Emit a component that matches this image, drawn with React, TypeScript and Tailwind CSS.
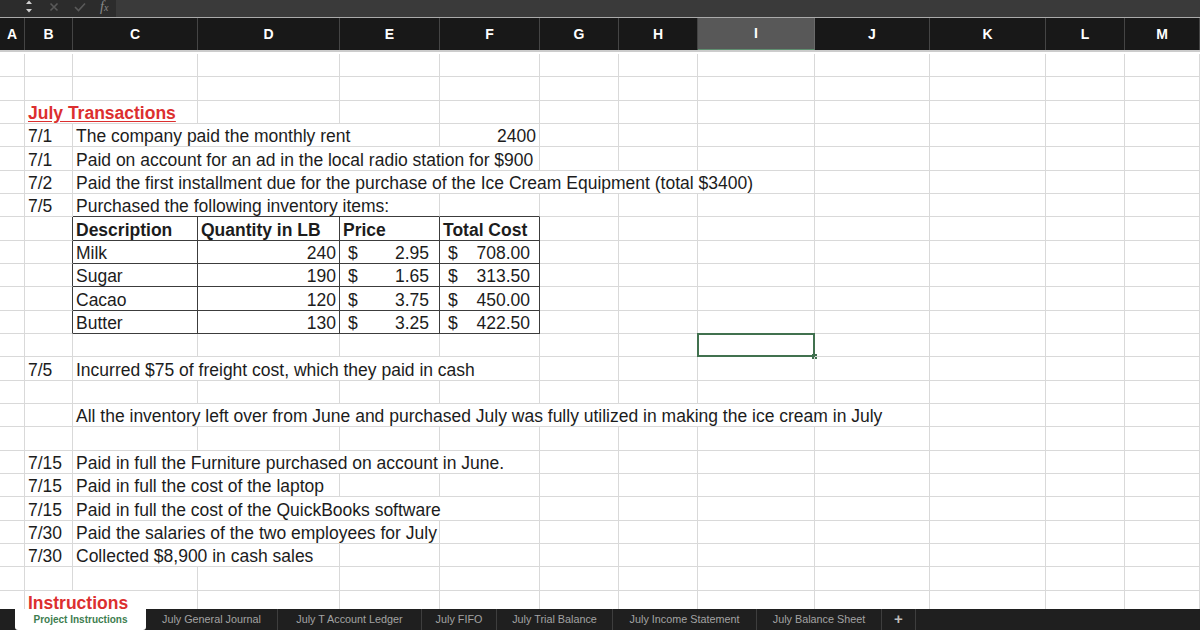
import React from "react";

const GRID =
  "grid grid-cols-[25px_48px_125px_142px_100px_100px_79px_79px_117px_115px_116px_79px_75px]";

const SPAN: Record<number, string> = {
  1: "col-span-1",
  2: "col-span-2",
  3: "col-span-3",
  4: "col-span-4",
  5: "col-span-5",
  6: "col-span-6",
  7: "col-span-7",
  8: "col-span-8",
};

const LIGHT = "border-r-[#d9d9d9] border-b-[#d9d9d9]";
const DARK = "border-r-[#3c3c3c] border-b-[#3c3c3c]";

type Cell = {
  col: number;
  span?: number;
  content?: React.ReactNode;
  cls?: string;
  border?: string;
  selected?: boolean;
};

function buildRow(cells: Cell[]): Cell[] {
  const out: Cell[] = [];
  let c = 0;
  const sorted = [...cells].sort((a, b) => a.col - b.col);
  let i = 0;
  while (c < 13) {
    const cell = sorted[i];
    if (cell && cell.col === c) {
      out.push(cell);
      c += cell.span ?? 1;
      i++;
    } else {
      out.push({ col: c });
      c++;
    }
  }
  return out;
}

const date = (d: string): Cell => ({ col: 1, content: d });
const txt = (t: string, span: number): Cell => ({ col: 2, span, content: t });

const Money = ({ v, price }: { v: string; price?: boolean }) => (
  <div
    className={
      price
        ? "flex w-full justify-between pl-[5px] pr-[7px]"
        : "flex w-full justify-between pl-[5px] pr-[6px]"
    }
  >
    <span>$</span>
    <span>{v}</span>
  </div>
);

const tableRow = (desc: string, qty: string, price: string, total: string): Cell[] =>
  buildRow([
    { col: 1, border: "border-r-[#3c3c3c] border-b-[#d9d9d9]" },
    { col: 2, content: desc, border: DARK },
    { col: 3, content: qty, cls: "justify-end pr-[2px]", border: DARK },
    { col: 4, content: <Money v={price} price />, border: DARK },
    { col: 5, content: <Money v={total} />, border: DARK },
  ]);

const redTitle = "font-bold text-[#dc2f2f]";

const rows: Cell[][] = [
  buildRow([]),
  buildRow([]),
  buildRow([
    {
      col: 1,
      span: 2,
      content: <span className={`${redTitle} underline underline-offset-[2px]`}>July Transactions</span>,
    },
  ]),
  buildRow([
    date("7/1"),
    txt("The company paid the monthly rent", 3),
    { col: 5, content: "2400", cls: "justify-end pr-[1px]" },
  ]),
  buildRow([date("7/1"), txt("Paid on account for an ad in the local radio station for $900", 4)]),
  buildRow([
    date("7/2"),
    txt(
      "Paid the first installment due for the purchase of the Ice Cream Equipment (total $3400)",
      7
    ),
  ]),
  buildRow([
    date("7/5"),
    { col: 2, span: 3, content: "Purchased the following inventory items:", border: "border-r-[#d9d9d9] border-b-[#3c3c3c]" },
    { col: 5, border: "border-r-[#d9d9d9] border-b-[#3c3c3c]" },
  ]),
  buildRow([
    { col: 1, border: "border-r-[#3c3c3c] border-b-[#d9d9d9]" },
    { col: 2, content: "Description", cls: "font-bold", border: DARK },
    { col: 3, content: "Quantity in LB", cls: "font-bold", border: DARK },
    { col: 4, content: "Price", cls: "font-bold", border: DARK },
    { col: 5, content: "Total Cost", cls: "font-bold", border: DARK },
  ]),
  tableRow("Milk", "240", "2.95", "708.00"),
  tableRow("Sugar", "190", "1.65", "313.50"),
  tableRow("Cacao", "120", "3.75", "450.00"),
  tableRow("Butter", "130", "3.25", "422.50"),
  buildRow([{ col: 8, selected: true }]),
  buildRow([date("7/5"), txt("Incurred $75 of freight cost, which they paid in cash", 4)]),
  buildRow([]),
  buildRow([
    txt(
      "All the inventory left over from June and purchased July was fully utilized in making the ice cream in July",
      8
    ),
  ]),
  buildRow([]),
  buildRow([date("7/15"), txt("Paid in full the Furniture purchased on account in June.", 4)]),
  buildRow([date("7/15"), txt("Paid in full the cost of the laptop", 2)]),
  buildRow([date("7/15"), txt("Paid in full the cost of the QuickBooks software", 4)]),
  buildRow([date("7/30"), txt("Paid the salaries of the two employees for July", 3)]),
  buildRow([date("7/30"), txt("Collected $8,900 in cash sales", 2)]),
  buildRow([]),
  buildRow([
    {
      col: 1,
      span: 2,
      content: <span className={`${redTitle} text-[17.5px]`}>Instructions</span>,
    },
  ]),
];

const headers = ["A", "B", "C", "D", "E", "F", "G", "H", "I", "J", "K", "L", "M"];

const tabs = [
  { label: "Project Instructions", w: "w-[131px]", active: true },
  { label: "July General Journal", w: "w-[132px]" },
  { label: "July T Account Ledger", w: "w-[144px]" },
  { label: "July FIFO", w: "w-[75px]" },
  { label: "July Trial Balance", w: "w-[116px]" },
  { label: "July Income Statement", w: "w-[144px]" },
  { label: "July Balance Sheet", w: "w-[125px]" },
  { label: "+", w: "w-[34px]", plus: true },
];

export default function App() {
  return (
    <div className="flex h-[630px] w-[1200px] flex-col overflow-hidden bg-white font-['Liberation_Sans',Arial,sans-serif]">
      {/* formula toolbar */}
      <div className="flex h-[17px] shrink-0">
        <div className="flex w-[116px] items-start bg-[#2c2c2c]">
          <svg className="ml-[25px] mt-[0px]" width="8" height="14" viewBox="0 0 8 14">
            <path d="M1 4 L4 0.5 L7 4 Z" fill="#cfcfcf" />
            <path d="M1 9 L4 12.5 L7 9 Z" fill="#cfcfcf" />
          </svg>
          <svg className="ml-[16px] mt-[2px]" width="10" height="10" viewBox="0 0 10 10">
            <path d="M1.5 1.5 L8.5 8.5 M8.5 1.5 L1.5 8.5" stroke="#5a5a5a" strokeWidth="1.6" />
          </svg>
          <svg className="ml-[15px] mt-[2px]" width="12" height="10" viewBox="0 0 12 10">
            <path d="M1 5 L4.5 8.5 L11 1.5" stroke="#5a5a5a" strokeWidth="1.6" fill="none" />
          </svg>
          <span className="ml-[14px] mt-[0px] font-['Liberation_Serif',serif] text-[14px] italic leading-none text-[#8a8a8a]">
            f<span className="text-[10px]">x</span>
          </span>
        </div>
        <div className="flex-1 bg-[#3a3a3a]" />
      </div>
      <div className="h-px shrink-0 bg-[#aaaaaa]" />
      {/* column headers */}
      <div className={`${GRID} h-[32px] shrink-0 bg-[#181818]`}>
        {headers.map((h) => (
          <div
            key={h}
            className={
              h === "I"
                ? "flex items-center justify-center border-r border-b border-r-[#6a6a6a] border-b-[#5f8f70] bg-[#585858] text-[14px] font-bold text-white"
                : "flex items-center justify-center border-r border-[#444444] text-[14px] font-bold text-white"
            }
          >
            {h}
          </div>
        ))}
      </div>
      <div className="h-[2px] shrink-0 bg-[#cccccc]" />
      {/* sheet body */}
      <div className="flex-1 overflow-hidden pt-[2px] text-[17.5px] leading-none text-[#1c1c1c]">
        {rows.map((row, ri) => (
          <div key={ri} className={`${GRID} h-[23.333px]`}>
            {row.map((cell) => (
              <div
                key={cell.col}
                className={`relative flex items-center overflow-hidden whitespace-nowrap border-r border-b pl-[3px] pr-[3px] pt-[4px] ${SPAN[cell.span ?? 1]} ${cell.border ?? LIGHT} ${cell.cls ?? ""} ${cell.selected ? "overflow-visible" : ""}`}
              >
                {cell.content}
                {cell.selected && (
                  <div className="absolute left-[-1px] top-[-1px] h-[24px] w-[118px] border-2 border-[#41714f]">
                    <div className="absolute bottom-[-4px] right-[-4px] h-[5px] w-[5px] bg-[#41714f]" />
                  </div>
                )}
              </div>
            ))}
          </div>
        ))}
      </div>
      {/* sheet tabs */}
      <div className="flex h-[21px] shrink-0 bg-[#1f1f1f] pl-[15px]">
        {tabs.map((t) =>
          t.active ? (
            <div
              key={t.label}
              className={`${t.w} flex items-center justify-center rounded-b-[3px] bg-white text-[10px] font-bold text-[#3d7d4f]`}
            >
              {t.label}
            </div>
          ) : (
            <div
              key={t.label}
              className={`${t.w} flex items-center justify-center border-r border-[#3e3e3e] ${t.plus ? "text-[15px] font-bold text-[#bdbdbd]" : "text-[10.8px] text-[#a3a3a3]"}`}
            >
              {t.label}
            </div>
          )
        )}
      </div>
    </div>
  );
}
